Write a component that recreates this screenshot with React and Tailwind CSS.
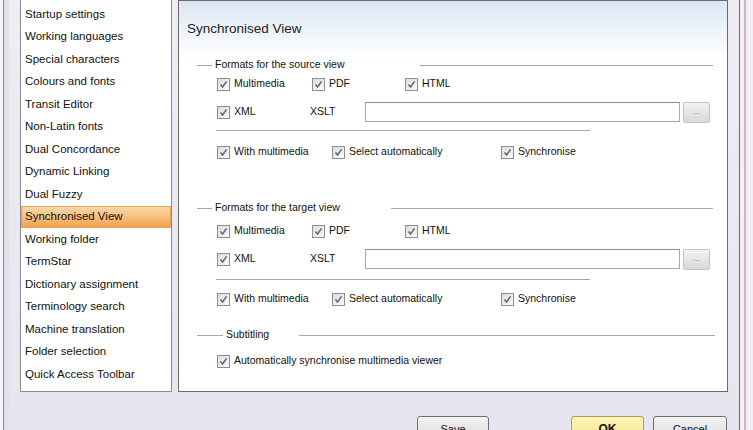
import React from 'react';

const items = [
  'Startup settings',
  'Working languages',
  'Special characters',
  'Colours and fonts',
  'Transit Editor',
  'Non-Latin fonts',
  'Dual Concordance',
  'Dynamic Linking',
  'Dual Fuzzy',
  'Synchronised View',
  'Working folder',
  'TermStar',
  'Dictionary assignment',
  'Terminology search',
  'Machine translation',
  'Folder selection',
  'Quick Access Toolbar',
];

function Check() {
  return (
    <span className="inline-flex h-[13px] w-[13px] shrink-0 items-center justify-center border border-[#8e8f8f] bg-gradient-to-br from-[#dcdcdc] to-[#fbfbfb]">
      <svg width="9" height="9" viewBox="0 0 9 9">
        <path d="M1.5 4.5 L3.6 7 L7.6 1.4" fill="none" stroke="#5a6a86" strokeWidth="1.6" />
      </svg>
    </span>
  );
}

function Box({ x, label }) {
  return (
    <div className="absolute top-0 flex h-full items-center gap-[4px]" style={{ left: x }}>
      <Check />
      <span>{label}</span>
    </div>
  );
}

function Header({ label, lead, gap }) {
  return (
    <div className="flex h-[14px] items-center pl-[18px] pr-[14px]">
      <div className="h-px bg-[#a6a6a6]" style={{ width: lead }} />
      <span className="px-[3px]">{label}</span>
      <div className="h-px flex-1 bg-[#a6a6a6]" style={{ marginLeft: gap }} />
    </div>
  );
}

function Group({ title, gap, top, rowTop, lineTop, row3Top }) {
  return (
    <div>
      <div style={{ marginTop: top }}>
        <Header label={title} lead={15} gap={gap} />
      </div>
      <div className="relative h-[20px]" style={{ marginTop: rowTop }}>
        <Box x={38} label="Multimedia" />
        <Box x={133} label="PDF" />
        <Box x={226} label="HTML" />
      </div>
      <div className="relative mt-[8px] flex h-[20px] items-center">
        <Box x={38} label="XML" />
        <span className="absolute left-[131px]">XSLT</span>
        <div className="ml-[186px] h-[20px] w-[315px] border border-[#a9a9a9] border-t-[#8c8c8c] bg-white" />
        <div className="ml-[3px] flex h-[21px] w-[27px] items-center justify-center rounded-[2px] border border-[#c4c4c4] bg-gradient-to-b from-[#f2f2f2] to-[#d9d9d9] text-[8px] leading-none text-[#7a7a7a]">
          ...
        </div>
      </div>
      <div className="ml-[37px] h-px w-[374px] bg-[#a6a6a6]" style={{ marginTop: lineTop }} />
      <div className="relative h-[20px]" style={{ marginTop: row3Top }}>
        <Box x={38} label="With multimedia" />
        <Box x={153} label="Select automatically" />
        <Box x={322} label="Synchronise" />
      </div>
    </div>
  );
}

export default function App() {
  return (
    <div className="relative h-[430px] w-[753px] overflow-hidden bg-gradient-to-b from-[#eeedf4] to-[#e6e5f0] text-[#111]" style={{ fontFamily: '"Liberation Sans", Arial, sans-serif' }}>
      <div className="absolute left-0 top-0 h-full w-[9px] border-l-[3px] border-l-[#f7f6fa] bg-[#e3e1ec]">
        <div className="h-full w-px bg-[#8d8a98]" />
      </div>
      <div className="absolute right-0 top-0 flex h-full w-[14px]">
        <div className="h-full w-px bg-[#6e6678]" />
        <div className="h-full w-[4px] bg-[#f4eff5]" />
        <div className="h-full w-[2px] bg-[#c9b3c6]" />
        <div className="h-full flex-1 bg-[#f3eef4]" />
      </div>

      <div className="flex pl-[20px]">
        <div className="h-[392px] w-[152px] border border-t-0 border-[#8a8a8a] bg-white pt-[3px] text-[11.5px]">
          {items.map((it) => (
            <div
              key={it}
              className={
                it === 'Synchronised View'
                  ? 'flex h-[22.5px] items-center border border-[#e0a35a] bg-gradient-to-b from-[#fbd6a6] via-[#f7be7c] to-[#f2a24e] pl-[3px]'
                  : 'flex h-[22.5px] items-center pl-[4px]'
              }
            >
              {it}
            </div>
          ))}
        </div>

        <div className="ml-[6px] h-[392px] w-[550px] border border-[#6b6b6b] bg-white text-[10.5px]">
          <div className="h-[58px] bg-gradient-to-b from-[#dbe6f3] via-[#edf3fa] to-white">
            <div className="pl-[8px] pt-[18px] text-[13.5px] leading-[20px] text-[#222]">Synchronised View</div>
          </div>
          <div className="-mt-[1px]">
            <Group title="Formats for the source view" gap={72} top={0} rowTop={2} lineTop={8} row3Top={11} />
            <Group title="Formats for the target view" gap={48} top={39} rowTop={6} lineTop={10} row3Top={9} />
            <div className="mt-[19px] flex h-[14px] items-center pl-[18px] pr-[12px]">
              <div className="h-px w-[26px] bg-[#a6a6a6]" />
              <span className="px-[3px]">Subtitling</span>
              <div className="ml-[27px] h-px flex-1 bg-[#a6a6a6]" />
            </div>
            <div className="relative mt-[9px] h-[20px]">
              <Box x={38} label="Automatically synchronise multimedia viewer" />
            </div>
          </div>
        </div>
      </div>

      <div className="absolute left-[417px] top-[416px] flex h-[24px] w-[72px] justify-center rounded-[3px] border border-[#707070] bg-gradient-to-b from-[#f2f2f2] to-[#dcdcdc] pt-[4px] text-[11px]">Save</div>
      <div className="absolute left-[571px] top-[416px] flex h-[24px] w-[73px] justify-center rounded-[3px] border border-[#b59b44] bg-gradient-to-b from-[#fdf6c3] to-[#f7e27a] pt-[3px] text-[12px] font-bold">OK</div>
      <div className="absolute left-[653px] top-[416px] flex h-[24px] w-[74px] justify-center rounded-[3px] border border-[#707070] bg-gradient-to-b from-[#f2f2f2] to-[#dcdcdc] pt-[4px] text-[11px]">Cancel</div>
    </div>
  );
}
